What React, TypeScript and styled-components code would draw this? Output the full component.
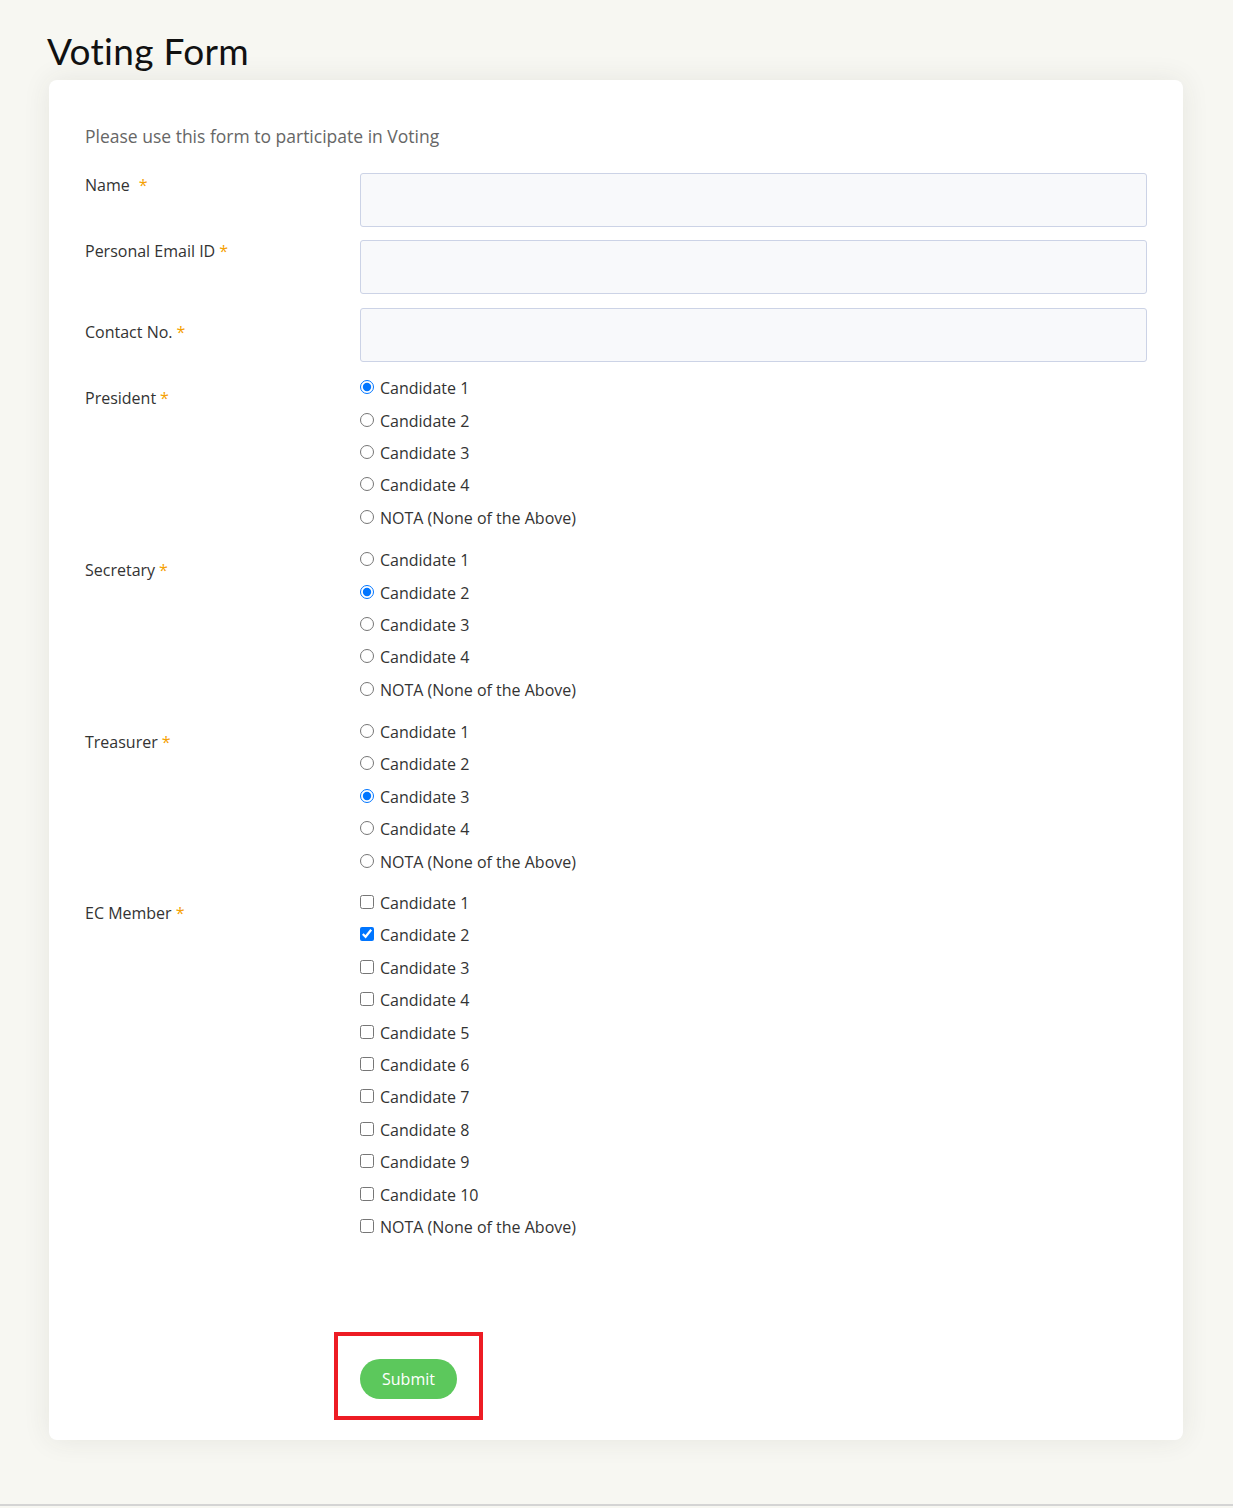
import React from "react";
import styled, { createGlobalStyle } from "styled-components";

const Global = createGlobalStyle`
  html, body { margin: 0; padding: 0; }
  body {
    background: #f7f7f2;
    font-family: "Open Sans", "Noto Sans", sans-serif;
    color: #333;
  }
`;

const Page = styled.div`
  min-height: 1506px;
  border-bottom: 2px solid #d4d4d4;
  box-sizing: border-box;
  padding: 27px 50px 0 47px;
`;

const Title = styled.h1`
  margin: 0 0 5px 0;
  font-family: "Lato", "Noto Sans", sans-serif;
  font-weight: 400;
  font-size: 37px;
  line-height: 48px;
  color: #111;
  letter-spacing: 0.3px;
`;

const Card = styled.div`
  margin-left: 2px;
  background: #fff;
  border-radius: 8px;
  box-shadow: 0 0 28px rgba(60, 60, 40, 0.09);
  padding: 44px 36px 20px 36px;
`;

const Intro = styled.p`
  margin: 0 0 25px 0;
  font-size: 17.5px;
  line-height: 24px;
  color: #666;
`;

const Row = styled.div<{ $gap: number }>`
  display: grid;
  grid-template-columns: 275px 1fr;
  margin-bottom: ${(p) => p.$gap}px;
`;

const Label = styled.label<{ $top: number }>`
  padding-top: ${(p) => p.$top}px;
  font-size: 16px;
  line-height: 22px;
  color: #333;
`;

const Star = styled.span<{ $space?: boolean }>`
  color: #f5a000;
  margin-left: ${(p) => (p.$space ? 9 : 4)}px;
`;

const Input = styled.input`
  box-sizing: border-box;
  width: 100%;
  height: 54px;
  border: 1px solid #ccd3e6;
  border-radius: 3px;
  background: #f8f9fb;
  outline: none;
`;

const Options = styled.div`
  display: flex;
  flex-direction: column;
`;

const Option = styled.label`
  display: flex;
  align-items: center;
  height: 32.4px;
  font-size: 16px;
  color: #333;
`;

const Control = styled.input`
  width: 14px;
  height: 14px;
  margin: -2px 6px 0 0;
  accent-color: #0075ff;
`;

const SubmitArea = styled.div`
  display: grid;
  grid-template-columns: 249px auto;
  margin-top: 89px;
`;

const Highlight = styled.div`
  justify-self: start;
  border: 4px solid #ed1c24;
  padding: 23px 22px 17px 22px;
`;

const SubmitButton = styled.button`
  height: 40px;
  padding: 0 22px;
  border: none;
  border-radius: 20px;
  background: #5cc85c;
  color: #fff;
  font-family: "Open Sans", "Noto Sans", sans-serif;
  font-size: 16px;
  cursor: pointer;
`;

type Group = {
  label: string;
  type: "radio" | "checkbox";
  count: number;
  checked: number;
  gap: number;
};

const groups: Group[] = [
  { label: "President", type: "radio", count: 4, checked: 0, gap: 10 },
  { label: "Secretary", type: "radio", count: 4, checked: 1, gap: 10 },
  { label: "Treasurer", type: "radio", count: 4, checked: 2, gap: 9 },
  { label: "EC Member", type: "checkbox", count: 10, checked: 1, gap: 0 },
];

export default function App() {
  return (
    <>
      <Global />
      <Page>
        <Title>Voting Form</Title>
        <Card>
          <Intro>Please use this form to participate in Voting</Intro>
          <Row $gap={13}>
            <Label $top={1}>
              Name<Star $space>*</Star>
            </Label>
            <Input />
          </Row>
          <Row $gap={14}>
            <Label $top={0}>
              Personal Email ID<Star>*</Star>
            </Label>
            <Input />
          </Row>
          <Row $gap={10}>
            <Label $top={13}>
              Contact No.<Star>*</Star>
            </Label>
            <Input />
          </Row>
          {groups.map((g) => {
            const items = [
              ...Array.from({ length: g.count }, (_, i) => `Candidate ${i + 1}`),
              "NOTA (None of the Above)",
            ];
            return (
              <Row $gap={g.gap} key={g.label}>
                <Label $top={15}>
                  {g.label}
                  <Star>*</Star>
                </Label>
                <Options>
                  {items.map((t, i) => (
                    <Option key={t}>
                      <Control
                        type={g.type}
                        name={g.label}
                        defaultChecked={i === g.checked}
                      />
                      {t}
                    </Option>
                  ))}
                </Options>
              </Row>
            );
          })}
          <SubmitArea>
            <div />
            <Highlight>
              <SubmitButton>Submit</SubmitButton>
            </Highlight>
          </SubmitArea>
        </Card>
      </Page>
    </>
  );
}
